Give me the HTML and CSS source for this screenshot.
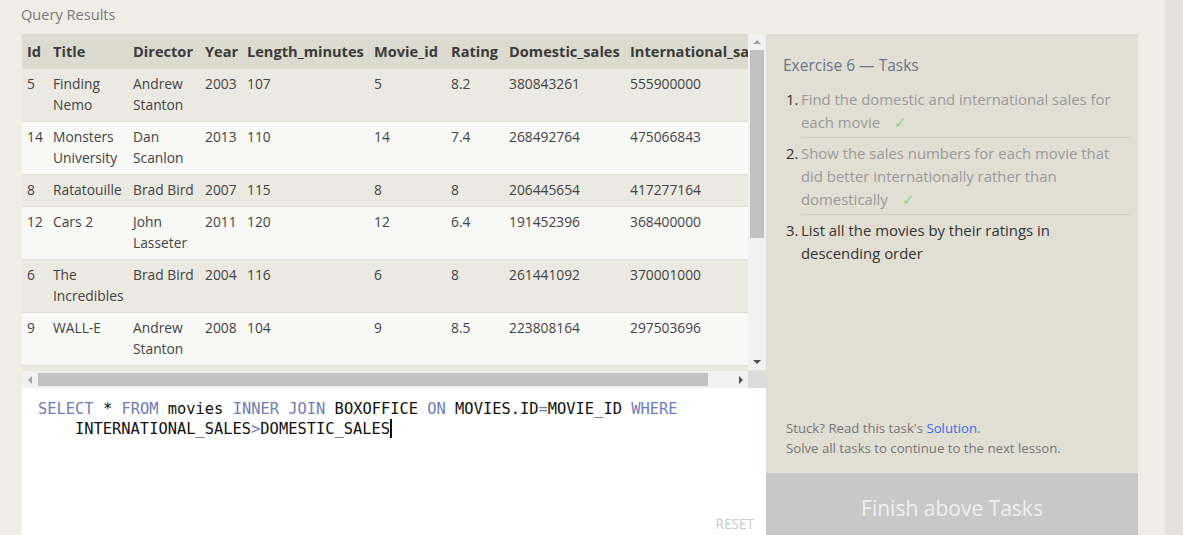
FILE: index.html
```html
<!DOCTYPE html>
<html>
<head>
<meta charset="utf-8">
<link rel="stylesheet" href="styles.css">
</head>
<body>
<div class="shell">
  <div class="content">
    <div class="caption">Query Results</div>
    <div class="main">
      <div class="left">
        <div class="results">
          <div class="viewport">
            <table class="grid">
              <colgroup>
                <col class="c-id"><col class="c-title"><col class="c-dir"><col class="c-year"><col class="c-len"><col class="c-mid"><col class="c-rat"><col class="c-dom"><col class="c-int">
              </colgroup>
              <thead>
                <tr><th>Id</th><th>Title</th><th>Director</th><th>Year</th><th>Length_minutes</th><th>Movie_id</th><th>Rating</th><th>Domestic_sales</th><th>International_sales</th></tr>
              </thead>
              <tbody>
                <tr><td>5</td><td>Finding Nemo</td><td>Andrew Stanton</td><td>2003</td><td>107</td><td>5</td><td>8.2</td><td>380843261</td><td>555900000</td></tr>
                <tr><td>14</td><td>Monsters University</td><td>Dan Scanlon</td><td>2013</td><td>110</td><td>14</td><td>7.4</td><td>268492764</td><td>475066843</td></tr>
                <tr><td>8</td><td>Ratatouille</td><td>Brad Bird</td><td>2007</td><td>115</td><td>8</td><td>8</td><td>206445654</td><td>417277164</td></tr>
                <tr><td>12</td><td>Cars 2</td><td>John Lasseter</td><td>2011</td><td>120</td><td>12</td><td>6.4</td><td>191452396</td><td>368400000</td></tr>
                <tr><td>6</td><td>The Incredibles</td><td>Brad Bird</td><td>2004</td><td>116</td><td>6</td><td>8</td><td>261441092</td><td>370001000</td></tr>
                <tr><td>9</td><td>WALL-E</td><td>Andrew Stanton</td><td>2008</td><td>104</td><td>9</td><td>8.5</td><td>223808164</td><td>297503696</td></tr>
                <tr><td>7</td><td>Up</td><td>Pete Docter</td><td>2009</td><td>101</td><td>7</td><td>8.3</td><td>293004164</td><td>438338580</td></tr>
              </tbody>
            </table>
          </div>
          <div class="vscroll">
            <div class="arrow arrow-up dim"></div>
            <div class="vtrack"><div class="vthumb"></div></div>
            <div class="arrow arrow-down"></div>
          </div>
          <div class="hscroll">
            <div class="harrow arrow-left dim"></div>
            <div class="htrack"><div class="hthumb"></div></div>
            <div class="harrow arrow-right"></div>
          </div>
          <div class="corner"></div>
        </div>
        <div class="editor">
          <div class="code"><span class="kw">SELECT</span> * <span class="kw">FROM</span> movies <span class="kw">INNER</span> <span class="kw">JOIN</span> BOXOFFICE <span class="kw">ON</span> MOVIES.ID<span class="kw">=</span>MOVIE_ID <span class="kw">WHERE</span></div>
          <div class="code indent">INTERNATIONAL_SALES<span class="kw">&gt;</span>DOMESTIC_SALES<span class="cursor"></span></div>
          <div class="reset">RESET</div>
        </div>
      </div>
      <div class="right">
        <div class="tasks">
          <div class="tasks-title">Exercise 6 — Tasks</div>
          <ol class="task-list">
            <li class="task done"><span class="num">1.</span><span class="txt">Find the domestic and international sales for each movie <span class="check">✓</span></span></li>
            <li class="task done"><span class="num">2.</span><span class="txt">Show the sales numbers for each movie that did better internationally rather than domestically <span class="check">✓</span></span></li>
            <li class="task"><span class="num">3.</span><span class="txt">List all the movies by their ratings in descending order</span></li>
          </ol>
          <div class="help">
            <div>Stuck? Read this task's <a class="link" href="#">Solution</a>.</div>
            <div>Solve all tasks to continue to the next lesson.</div>
          </div>
        </div>
        <div class="finish">Finish above Tasks</div>
      </div>
    </div>
  </div>
  <div class="edge"></div>
</div>
</body>
</html>
```

FILE: styles.css
```css
html, body {
  margin: 0;
  padding: 0;
  height: 100%;
  overflow: hidden;
}
body {
  background: #efede6;
  font-family: "Open Sans", "Noto Sans", sans-serif;
  color: #333;
}
.shell {
  display: flex;
  height: 535px;
}
.content {
  width: 1165px;
  padding-left: 22px;
  box-sizing: border-box;
}
.edge {
  flex: 1;
  background: #e4e1dd;
}
.caption {
  height: 34px;
  line-height: 28px;
  font-size: 14.6px;
  color: #7a7a7a;
  margin-left: -1px;
}
.main {
  display: flex;
}
.left {
  width: 744px;
  display: flex;
  flex-direction: column;
}
.results {
  display: grid;
  grid-template-columns: 726px 18px;
  grid-template-rows: 336px 18px;
}
.viewport {
  overflow: hidden;
}
.grid {
  border-collapse: collapse;
  table-layout: fixed;
  width: 760px;
  font-size: 13.8px;
  line-height: 21px;
}
.c-id { width: 26px; }
.c-title { width: 80px; }
.c-dir { width: 72px; }
.c-year { width: 42px; }
.c-len { width: 127px; }
.c-mid { width: 77px; }
.c-rat { width: 58px; }
.c-dom { width: 121px; }
.c-int { width: 157px; }
.grid th {
  background: #dcdbd0;
  text-align: left;
  font-weight: 700;
  font-size: 14.6px;
  color: #3a3a3a;
  padding: 7px 5px 6px;
  white-space: nowrap;
  overflow: hidden;
}
.grid td {
  padding: 4px 5px 6px;
  vertical-align: top;
  border-top: 1px solid #e0ded6;
  color: #444;
}
.grid tbody tr:nth-child(odd) td {
  background: #eae9e2;
}
.grid tbody tr:nth-child(even) td {
  background: #f8f8f7;
}
.vscroll {
  background: #f1f1f1;
  display: flex;
  flex-direction: column;
}
.arrow {
  height: 16px;
  position: relative;
}
.arrow::after {
  content: "";
  position: absolute;
  left: 5px;
  width: 0;
  height: 0;
  border-left: 4px solid transparent;
  border-right: 4px solid transparent;
}
.arrow-up::after {
  top: 6px;
  border-bottom: 4px solid #a3a3a3;
}
.arrow-down::after {
  top: 6px;
  border-top: 4px solid #505050;
}
.vtrack {
  flex: 1;
  padding: 0 2px;
}
.vthumb {
  height: 188px;
  background: #c1c1c1;
}
.hscroll {
  background: #f1f1f1;
  display: flex;
  align-items: center;
  border-top: 1px solid #e6e4dc;
}
.harrow {
  width: 16px;
  height: 17px;
  position: relative;
}
.harrow::after {
  content: "";
  position: absolute;
  top: 5px;
  width: 0;
  height: 0;
  border-top: 4px solid transparent;
  border-bottom: 4px solid transparent;
}
.arrow-left::after {
  left: 6px;
  border-right: 4px solid #a3a3a3;
}
.arrow-right::after {
  left: 7px;
  border-left: 4px solid #505050;
}
.htrack {
  flex: 1;
  padding: 2px 0;
}
.hthumb {
  width: 670px;
  height: 13px;
  background: #c1c1c1;
}
.corner {
  background: #dcdcdc;
  border-top: 1px solid #e6e4dc;
}
.editor {
  background: #fff;
  height: 160px;
  padding: 11px 16px 0;
  box-sizing: border-box;
  position: relative;
}
.code {
  font-family: "DejaVu Sans Mono", "Liberation Mono", monospace;
  font-size: 15.4px;
  line-height: 20px;
  color: #111;
  white-space: pre;
}
.code.indent {
  padding-left: 37px;
}
.kw {
  color: #6f7db6;
}
.cursor {
  display: inline-block;
  width: 2px;
  height: 19px;
  background: #111;
  vertical-align: -4px;
}
.reset {
  position: absolute;
  right: 12px;
  top: 126px;
  font-size: 13.6px;
  color: #c9c9c9;
}
.right {
  width: 372px;
  display: flex;
  flex-direction: column;
}
.tasks {
  background: #e1dfd4;
  height: 439px;
  box-sizing: border-box;
  padding: 20px 8px 15px 17px;
  display: flex;
  flex-direction: column;
}
.tasks-title {
  font-size: 15.5px;
  line-height: 22px;
  color: #6b7585;
}
.task-list {
  list-style: none;
  margin: 12px 0 0;
  padding: 0;
}
.task {
  display: flex;
  font-size: 14.9px;
  line-height: 23px;
}
.task .num {
  width: 15px;
  flex: none;
  padding-left: 3px;
  color: #333;
}
.task .txt {
  flex: 1;
  color: #333;
  padding: 4px 0 3px;
}
.task:first-child .txt {
  padding-top: 0;
}
.task:first-child .num {
  padding-top: 0;
}
.task + .task .num {
  padding-top: 4px;
}
.task:not(:last-child) .txt {
  border-bottom: 1px solid #d2d0c5;
}
.task.done .txt {
  color: #9a9a9a;
}
.check {
  color: #8fcf90;
  margin-left: 10px;
}
.help {
  margin-top: auto;
  font-size: 13.2px;
  line-height: 20px;
  color: #767676;
  padding-left: 3px;
}
.link {
  color: #3d6be8;
  text-decoration: none;
}
.finish {
  background: #c8c8c8;
  height: 70px;
  display: flex;
  align-items: center;
  justify-content: center;
  color: #efefef;
  font-size: 21px;
}
```
